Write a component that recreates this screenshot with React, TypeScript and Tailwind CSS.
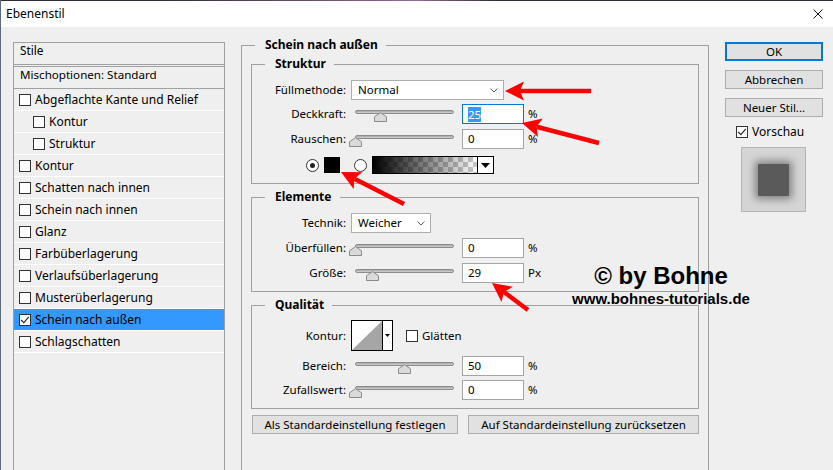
import React from "react";

type StyleItem = { name: string; indent?: boolean; checked?: boolean; selected?: boolean };

const styleItems: StyleItem[] = [
  { name: "Abgeflachte Kante und Relief" },
  { name: "Kontur", indent: true },
  { name: "Struktur", indent: true },
  { name: "Kontur" },
  { name: "Schatten nach innen" },
  { name: "Schein nach innen" },
  { name: "Glanz" },
  { name: "Farbüberlagerung" },
  { name: "Verlaufsüberlagerung" },
  { name: "Musterüberlagerung" },
  { name: "Schein nach außen", checked: true, selected: true },
  { name: "Schlagschatten" },
];

function Checkbox({ checked = false }: { checked?: boolean }) {
  return (
    <span className="flex h-[12px] w-[12px] shrink-0 items-center justify-center border border-[#333] bg-white">
      {checked && (
        <svg width="10" height="10" viewBox="0 0 10 10">
          <path d="M1.2 5 L3.9 7.7 L8.8 1.8" fill="none" stroke="#222" strokeWidth="1.1" />
        </svg>
      )}
    </span>
  );
}

function Chevron() {
  return (
    <svg width="8" height="5" viewBox="0 0 8 5">
      <path d="M0.5 0.5 L4 4 L7.5 0.5" fill="none" stroke="#606060" strokeWidth="1" />
    </svg>
  );
}

function Label({ children }: { children: React.ReactNode }) {
  return <span className="w-[94px] shrink-0 text-right">{children}</span>;
}

function Slider({ thumb }: { thumb: number }) {
  return (
    <div className="relative h-[20px] w-[116px] shrink-0">
      <div className="ml-[9px] mt-[6px] h-[4px] w-[99px] rounded-full border border-[#8c8c8c] bg-gradient-to-b from-[#a4a4a4] to-[#d4d4d4]" />
      <svg className="absolute top-[8px]" style={{ left: thumb }} width="13" height="10" viewBox="0 0 13 10">
        <path d="M0.5 9.5 V4.8 L6.5 0.6 L12.5 4.8 V9.5 Z" fill="#dadada" stroke="#8a8a8a" />
      </svg>
    </div>
  );
}

function NumberBox({ value, focused = false }: { value: string; focused?: boolean }) {
  return (
    <div
      className={
        focused
          ? "flex h-[20px] w-[62px] shrink-0 items-center border border-[#0078d7] bg-white pl-[5px]"
          : "flex h-[20px] w-[62px] shrink-0 items-center border border-[#a5a5a5] bg-white pl-[5px]"
      }
    >
      {focused ? <span className="bg-[#3399ff] leading-[15px] text-white">{value}</span> : <span>{value}</span>}
    </div>
  );
}

function SliderRow({
  label,
  value,
  unit,
  thumb,
  focused,
  className,
}: {
  label: string;
  value: string;
  unit: string;
  thumb: number;
  focused?: boolean;
  className: string;
}) {
  return (
    <div className={className}>
      <Label>{label}</Label>
      <Slider thumb={thumb} />
      <NumberBox value={value} focused={focused} />
      <span className="ml-[4px]">{unit}</span>
    </div>
  );
}

function Radio({ on = false }: { on?: boolean }) {
  return (
    <span className="flex h-[13px] w-[13px] shrink-0 items-center justify-center rounded-full border border-[#333] bg-white">
      {on && <span className="h-[5px] w-[5px] rounded-full bg-[#222]" />}
    </span>
  );
}

function Arrow({ x1, y1, x2, y2 }: { x1: number; y1: number; x2: number; y2: number }) {
  const dx = x2 - x1;
  const dy = y2 - y1;
  const len = Math.hypot(dx, dy);
  const ux = dx / len;
  const uy = dy / len;
  const bx = x2 - ux * 19;
  const by = y2 - uy * 19;
  const px = -uy * 9.5;
  const py = ux * 9.5;
  const nx = x2 - ux * 15;
  const ny = y2 - uy * 15;
  return (
    <g>
      <line x1={x1} y1={y1} x2={nx} y2={ny} stroke="#ff0000" strokeWidth="4.5" />
      <polygon points={`${x2},${y2} ${bx + px},${by + py} ${nx},${ny} ${bx - px},${by - py}`} fill="#ff0000" />
    </g>
  );
}

function StyleList() {
  return (
    <div className="mt-[15px] h-[460px] w-[212px] shrink-0 border border-[#a0a0a0] text-[12px]">
      <div className="flex h-[22px] items-center border-b border-[#a0a0a0] pb-[5px] pl-[6px] text-[11.8px]">Stile</div>
      <div className="mt-px flex h-[23px] items-center border-y border-[#a0a0a0] pb-[5px] pl-[6px] text-[11.6px]">
        Mischoptionen: Standard
      </div>
      {styleItems.map((s, i) => (
        <div
          key={i}
          className={
            (s.selected ? "bg-[#3399ff] " : "") +
            (s.indent
              ? "flex h-[22px] items-center gap-[4px] border-b border-white pl-[19px]"
              : "flex h-[22px] items-center gap-[4px] border-b border-white pl-[5px]")
          }
        >
          <Checkbox checked={s.checked} />
          <span>{s.name}</span>
        </div>
      ))}
    </div>
  );
}

function MainGroup() {
  return (
    <fieldset className="mt-[9px] h-[460px] w-[468px] shrink-0 border border-[#a0a0a0] px-[9px] pt-0">
      <legend className="ml-[4px] pl-[10px] pr-[8px] text-[12px] font-bold leading-[18px]">Schein nach außen</legend>

      {/* Struktur */}
      <fieldset className="mt-px border border-[#a0a0a0] pb-[9px]">
        <legend className="ml-[13px] pl-[10px] pr-[8px] text-[12px] font-bold leading-[18px]">Struktur</legend>
        <div className="mt-[7px] flex h-[20px] items-center">
          <Label>Füllmethode:</Label>
          <div className="ml-[5px] flex h-[20px] w-[153px] items-center justify-between border border-[#adadad] bg-white pl-[6px] pr-[5px]">
            <span>Normal</span>
            <Chevron />
          </div>
        </div>
        <SliderRow className="mt-[4px] flex h-[20px] items-center" label="Deckkraft:" value="25" unit="%" thumb={28} focused />
        <SliderRow className="mt-[5px] flex h-[20px] items-center" label="Rauschen:" value="0" unit="%" thumb={3} />
        <div className="mt-[7px] flex h-[18px] items-center pl-[54px]">
          <Radio on />
          <span className="ml-[5px] h-[16px] w-[16px] bg-black" />
          <span className="ml-[14px]">
            <Radio />
          </span>
          <div className="ml-[5px] flex h-[18px] w-[122px] border border-black">
            <div className="h-full w-[104px] bg-[image:repeating-conic-gradient(#c8c8c8_0%_25%,#ffffff_0%_50%)] bg-[length:10px_10px]">
              <div className="h-full w-full bg-gradient-to-r from-black to-transparent" />
            </div>
            <div className="flex flex-1 items-center justify-center border-l border-black bg-white">
              <svg width="9" height="5" viewBox="0 0 9 5">
                <path d="M0 0 H9 L4.5 5 Z" fill="#000" />
              </svg>
            </div>
          </div>
        </div>
      </fieldset>

      {/* Elemente */}
      <fieldset className="mt-[4px] border border-[#a0a0a0] pb-[8px]">
        <legend className="ml-[13px] pl-[10px] pr-[8px] text-[12px] font-bold leading-[18px]">Elemente</legend>
        <div className="mt-[7px] flex h-[20px] items-center">
          <Label>Technik:</Label>
          <div className="ml-[5px] flex h-[20px] w-[80px] items-center justify-between border border-[#adadad] bg-white pl-[6px] pr-[5px]">
            <span>Weicher</span>
            <Chevron />
          </div>
        </div>
        <SliderRow className="mt-[5px] flex h-[20px] items-center" label="Überfüllen:" value="0" unit="%" thumb={3} />
        <SliderRow className="mt-[5px] flex h-[20px] items-center" label="Größe:" value="29" unit="Px" thumb={20} />
      </fieldset>

      {/* Qualität */}
      <fieldset className="mt-[4px] border border-[#a0a0a0] pb-[8px]">
        <legend className="ml-[13px] pl-[10px] pr-[8px] text-[12px] font-bold leading-[18px]">Qualität</legend>
        <div className="mt-[6px] flex h-[31px] items-center">
          <Label>Kontur:</Label>
          <div className="ml-[5px] flex h-[31px] w-[42px] border border-black bg-white">
            <div className="h-full w-[31px] border-r border-black">
              <svg width="30" height="29" viewBox="0 0 30 29">
                <path d="M0 29 L30 0 V29 Z" fill="#a6a6a6" />
              </svg>
            </div>
            <div className="flex flex-1 items-center justify-center">
              <svg width="5" height="3" viewBox="0 0 5 3">
                <path d="M0 0 H5 L2.5 3 Z" fill="#000" />
              </svg>
            </div>
          </div>
          <span className="ml-[13px]">
            <Checkbox />
          </span>
          <span className="ml-[4px]">Glätten</span>
        </div>
        <SliderRow className="mt-[5px] flex h-[20px] items-center" label="Bereich:" value="50" unit="%" thumb={52} />
        <SliderRow className="mt-[4px] flex h-[20px] items-center" label="Zufallswert:" value="0" unit="%" thumb={3} />
      </fieldset>

      <div className="mt-[6px] flex pl-px">
        <button className="flex h-[19px] w-[206px] items-center justify-center border border-[#adadad] bg-[#e1e1e1]">
          Als Standardeinstellung festlegen
        </button>
        <button className="ml-[10px] flex h-[19px] w-[231px] items-center justify-center border border-[#adadad] bg-[#e1e1e1]">
          Auf Standardeinstellung zurücksetzen
        </button>
      </div>
    </fieldset>
  );
}

function RightColumn() {
  return (
    <div className="mt-[15px] flex w-[98px] shrink-0 flex-col">
      <button className="flex h-[19px] items-center justify-center border-2 border-[#0078d7] bg-[#e1e1e1]">OK</button>
      <button className="mt-[9px] flex h-[19px] items-center justify-center border border-[#adadad] bg-[#e1e1e1]">
        Abbrechen
      </button>
      <button className="mt-[9px] flex h-[19px] items-center justify-center border border-[#adadad] bg-[#e1e1e1]">
        Neuer Stil...
      </button>
      <div className="mt-[8px] flex h-[14px] items-center gap-[4px] pl-[11px]">
        <Checkbox checked />
        <span className="text-[12px]">Vorschau</span>
      </div>
      <div className="ml-[16px] mt-[8px] flex h-[65px] w-[65px] items-center justify-center border border-[#b4b4b4] bg-[#d5d5d5]">
        <div className="h-[32px] w-[31px] bg-[#5a5a5a] shadow-[0_0_8px_3px_rgba(0,0,0,0.4)]" />
      </div>
    </div>
  );
}

export default function App() {
  return (
    <div className="relative h-[470px] w-[833px] overflow-hidden border-l border-[#5d6a7a] bg-[#efefef] font-['Noto_Sans',sans-serif] text-[11.5px] text-black">
      <div className="h-px bg-gradient-to-r from-[#2c2c36] from-[18%] via-[#9a6890] to-[#2c2c36] to-[60%]" />
      <div className="flex h-[26px] items-center justify-between bg-white pl-[5px] pr-[10px]">
        <span className="text-[12px]">Ebenenstil</span>
        <svg width="10" height="10" viewBox="0 0 10 10">
          <path d="M0.5 0.5 L9.5 9.5 M9.5 0.5 L0.5 9.5" stroke="#111" strokeWidth="1" />
        </svg>
      </div>

      <div className="flex items-start gap-4 pl-[12px]">
        <StyleList />
        <MainGroup />
        <RightColumn />
      </div>

      {/* Wasserzeichen */}
      <div className="pointer-events-none absolute left-[560px] top-[262px] w-[200px] text-center font-['Liberation_Sans',Arial,sans-serif] font-bold text-black">
        <div className="text-[24px] leading-[28px]">© by Bohne</div>
        <div className="text-[15px] leading-[18px]">www.bohnes-tutorials.de</div>
      </div>

      <svg className="pointer-events-none absolute left-0 top-0" width="833" height="470" viewBox="0 0 833 470">
        <Arrow x1={590} y1={91} x2={504} y2={91} />
        <Arrow x1={598} y1={143} x2={521} y2={123} />
        <Arrow x1={403} y1={204} x2={340} y2={172} />
        <Arrow x1={527} y1={310} x2={491} y2={283} />
      </svg>
    </div>
  );
}
